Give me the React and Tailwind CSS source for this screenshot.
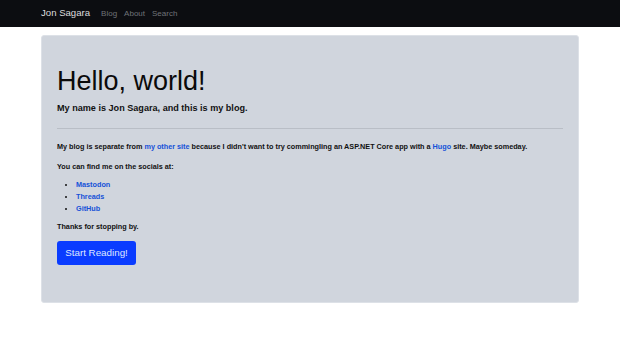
export default function App() {
  return (
    <div className="min-h-[343px] bg-white font-['Liberation_Sans',Arial,sans-serif]">
      <nav className="h-[27px] bg-[#0c0d11] flex items-center px-[41px]">
        <span className="text-[9.6px] text-[#dcdcde] mr-[11px]">Jon Sagara</span>
        <div className="flex gap-[7px] text-[8px] text-[#6f7378]">
          <a>Blog</a>
          <a>About</a>
          <a>Search</a>
        </div>
      </nav>

      <div className="mx-[41px] mt-[8px] h-[268px] bg-[#d0d5dd] border border-[#dde1e7] rounded-[3px] px-[15px] pt-[29px]">
        <h1 className="text-[27px] leading-[32px] text-[#0a0a0a]">Hello, world!</h1>
        <p className="text-[9.1px] leading-[12px] font-bold text-[#111] mt-[5px]">My name is Jon Sagara, and this is my blog.</p>
        <hr className="mt-[14px] border-t border-[#b9bec6]" />
        <p className="text-[7.25px] font-bold text-[#111] leading-[11px] mt-[12px]">
          My blog is separate from <a className="text-[#1551d8]">my other site</a> because I didn't want to try commingling an ASP.NET Core app with a <a className="text-[#1551d8]">Hugo</a> site. Maybe someday.
        </p>
        <p className="text-[7.25px] font-bold text-[#111] leading-[11px] mt-[9px]">You can find me on the socials at:</p>
        <ul className="list-disc pl-[19px] mt-[7px] text-[7.25px] font-bold leading-[12px] text-[#111]">
          <li><a className="text-[#1551d8]">Mastodon</a></li>
          <li><a className="text-[#1551d8]">Threads</a></li>
          <li><a className="text-[#1551d8]">GitHub</a></li>
        </ul>
        <p className="text-[7.25px] font-bold text-[#111] leading-[11px] mt-[6px]">Thanks for stopping by.</p>
        <button className="mt-[9px] h-[24px] w-[79px] bg-[#0a3cff] text-[#dfe6ff] text-[9.8px] rounded-[3px]">Start Reading!</button>
      </div>
    </div>
  );
}
